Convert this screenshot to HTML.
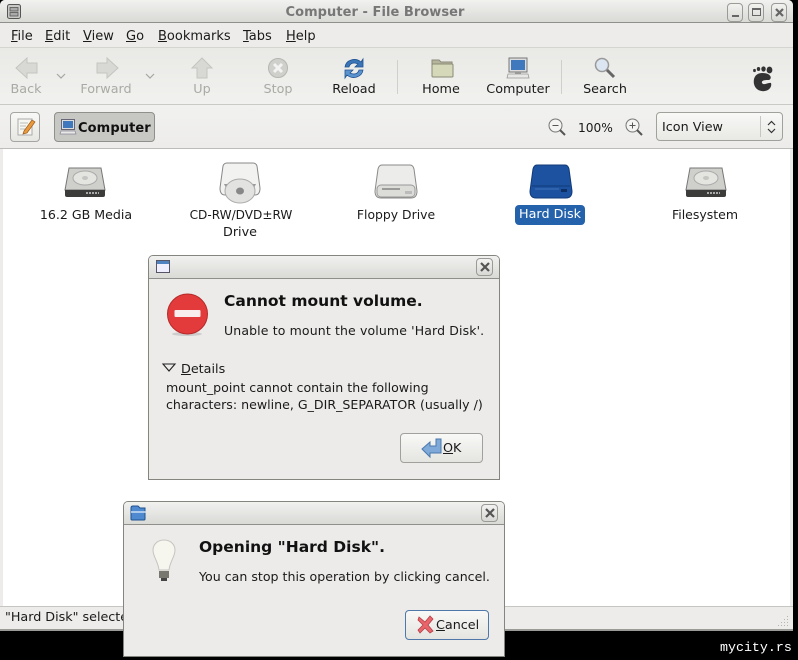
<!DOCTYPE html>
<html><head><meta charset="utf-8"><style>
html,body{margin:0;padding:0;background:#000}
#r{position:relative;width:798px;height:660px;overflow:hidden;background:#000;font-family:"DejaVu Sans",sans-serif;font-size:12.75px;color:#1a1a1a;filter:blur(.3px)}
#r div{position:absolute;box-sizing:border-box}
.t{white-space:nowrap;line-height:16px;height:16px}
.c{text-align:center;transform:translateX(-50%)}
.dis{color:#a9a9a5}
u{text-decoration:underline}
svg{position:absolute;overflow:visible}
.wb{width:16px;height:19px;border:1px solid #9a9a96;border-radius:4px;background:linear-gradient(#f2f2f0,#d8d8d5)}
.h1{font-weight:bold;font-size:15.5px;color:#111;line-height:20px;white-space:nowrap}
</style></head><body><div id="r">
<div style="left:0;top:0;width:793px;height:631px;background:#edecea;border-radius:5px 5px 0 0"></div>
<div style="left:0;top:0;width:793px;height:23px;background:linear-gradient(#f1f1ef,#d9d9d6);border-bottom:1px solid #8f8f8b;border-radius:5px 5px 0 0"></div>
<svg style="left:7px;top:4px" width="15" height="16"><rect x=".5" y=".5" width="13" height="14" rx="2" fill="#c9c9c5" stroke="#555"/><rect x="3" y="3.5" width="8" height="3.5" fill="#aaa" stroke="#555" stroke-width=".8"/><rect x="3" y="8.5" width="8" height="3.5" fill="#aaa" stroke="#555" stroke-width=".8"/></svg>
<div class="t c" style="left:375px;top:5px;font-weight:bold;font-size:13px;color:#777;letter-spacing:.05px">Computer - File Browser</div>
<div class="wb" style="left:727px;top:3px"></div><div style="left:732px;top:15px;width:7px;height:2px;background:#666"></div>
<div class="wb" style="left:748px;top:3px"></div><div style="left:752px;top:8px;width:9px;height:8px;border:1px solid #666;border-top-width:2px"></div>
<div class="wb" style="left:771px;top:3px"></div><svg style="left:775px;top:8px" width="9" height="9"><path d="M1 1L8 8M8 1L1 8" stroke="#666" stroke-width="2.2"/></svg>

<div style="left:0;top:47px;width:793px;height:1px;background:#d4d4d0"></div>
<div class="t" style="left:11px;top:29px;font-size:13px"><u>F</u>ile</div>
<div class="t" style="left:45px;top:29px;font-size:13px"><u>E</u>dit</div>
<div class="t" style="left:83px;top:29px;font-size:13px"><u>V</u>iew</div>
<div class="t" style="left:126px;top:29px;font-size:13px"><u>G</u>o</div>
<div class="t" style="left:158px;top:29px;font-size:13px"><u>B</u>ookmarks</div>
<div class="t" style="left:243px;top:29px;font-size:13px"><u>T</u>abs</div>
<div class="t" style="left:286px;top:29px;font-size:13px"><u>H</u>elp</div>

<div style="left:0;top:48px;width:793px;height:57px;background:linear-gradient(#e9e9e6,#f1f1ef);border-bottom:1px solid #c9c9c5"></div>
<svg style="left:15px;top:57px" width="24" height="22"><path d="M1 11L12 1V6H22V16H12V21Z" fill="#d8d8d4" stroke="#c4c4c0"/></svg>
<svg style="left:55px;top:72px" width="12" height="8"><path d="M2 2L6 6L10 2" fill="none" stroke="#a5a5a1" stroke-width="1.2"/></svg>
<svg style="left:95px;top:57px" width="24" height="22"><path d="M23 11L12 1V6H2V16H12V21Z" fill="#d8d8d4" stroke="#c4c4c0"/></svg>
<svg style="left:144px;top:72px" width="12" height="8"><path d="M2 2L6 6L10 2" fill="none" stroke="#a5a5a1" stroke-width="1.2"/></svg>
<svg style="left:191px;top:57px" width="22" height="22"><path d="M11 1L21 11H16V21H6V11H1Z" fill="#d8d8d4" stroke="#c4c4c0"/></svg>
<svg style="left:267px;top:57px" width="22" height="22"><circle cx="11" cy="11" r="9.5" fill="#cfcfcb" stroke="#b5b5b1"/><path d="M7 7L15 15M15 7L7 15" stroke="#f3f3f1" stroke-width="3"/></svg>
<svg style="left:343px;top:57px" width="22" height="24"><path d="M2 10C3 3 12 0 18 5L20 2V10H12L15 7C11 5 7 6 6 10Z" fill="#3a75b8" stroke="#1f5290" stroke-width=".8"/><path d="M20 13C19 20 10 23 4 18L2 21V13H10L7 16C11 18 15 17 16 13Z" fill="#5b93cf" stroke="#1f5290" stroke-width=".8"/></svg>
<div class="t c dis" style="left:26px;top:82px">Back</div>
<div class="t c dis" style="left:106px;top:82px">Forward</div>
<div class="t c dis" style="left:202px;top:82px">Up</div>
<div class="t c dis" style="left:278px;top:82px">Stop</div>
<div class="t c" style="left:354px;top:82px">Reload</div>
<div style="left:397px;top:60px;width:1px;height:34px;background:#cfcfcb"></div>
<svg style="left:431px;top:58px" width="23" height="20"><path d="M1 2H8L10 4H21V6H1Z" fill="#b5b59c" stroke="#8a8a78"/><rect x="1" y="6" width="21" height="13" rx="1" fill="#d5d9b9" stroke="#8a8a78"/></svg>
<div class="t c" style="left:441px;top:82px">Home</div>
<svg style="left:506px;top:57px" width="24" height="22"><rect x="3" y="1" width="18" height="14" fill="#ddd" stroke="#777"/><rect x="5" y="3" width="14" height="10" fill="#3f78bd"/><rect x="9" y="15" width="6" height="2" fill="#999"/><path d="M2 17H22L23 21H1Z" fill="#e8e8e6" stroke="#999" stroke-width=".8"/></svg>
<div class="t c" style="left:518px;top:82px">Computer</div>
<div style="left:561px;top:60px;width:1px;height:34px;background:#cfcfcb"></div>
<svg style="left:594px;top:57px" width="22" height="22"><path d="M12 12L20 20" stroke="#666" stroke-width="3"/><circle cx="8" cy="8" r="6.5" fill="#dbe6f2" stroke="#999" stroke-width="1.5"/></svg>
<div class="t c" style="left:605px;top:82px">Search</div>
<svg style="left:752px;top:66px" width="21" height="27"><path d="M10 7C3 7 1 13 2 18C3 23 8 26 13 25C18 24 20 20 19 17C16 16 12 20 10 17C9 14 14 14 17 14C20 13 20 7 10 7Z" fill="#333"/><ellipse cx="2.500" cy="4.500" rx="1.400" ry="1.600" fill="#333"/><ellipse cx="6.500" cy="3" rx="1.700" ry="2" fill="#333"/><ellipse cx="11.500" cy="3" rx="2.200" ry="2.600" fill="#333"/><ellipse cx="17.500" cy="4" rx="2.900" ry="3.400" fill="#333"/></svg>

<div style="left:0;top:105px;width:793px;height:44px;background:linear-gradient(#f1f1ef,#edecea);border-bottom:1px solid #bcbcb8"></div>
<div style="left:10px;top:112px;width:30px;height:30px;border:1px solid #a5a5a1;border-radius:4px;background:linear-gradient(#f8f8f6,#e6e6e3)"></div>
<svg style="left:16px;top:117px" width="20" height="20"><rect x="2" y="2" width="14" height="16" fill="#f7f7f1" stroke="#aaa"/><path d="M4 6H12M4 9H10M4 12H9" stroke="#bbb"/><path d="M8 14L16 3L19 5L11 16L7 17Z" fill="#e89a3c" stroke="#9a5a1c" stroke-width=".7"/></svg>
<div style="left:54px;top:112px;width:101px;height:30px;border:1px solid #8f8f8b;border-radius:4px;background:#c7c7c3"></div>
<svg style="left:60px;top:119px" width="16" height="16"><rect x="1.5" y=".5" width="13" height="10" fill="#ddd" stroke="#667"/><rect x="3" y="2" width="10" height="7" fill="#3f78bd"/><path d="M1 12H15L16 15H0Z" fill="#e8e8e6" stroke="#889" stroke-width=".7"/></svg>
<div class="t" style="left:78px;top:121px;font-weight:bold;font-size:13px;color:#111;letter-spacing:.1px">Computer</div>
<svg style="left:548px;top:118px" width="18" height="18"><circle cx="7.5" cy="7.5" r="6.5" fill="#f4f4f2" stroke="#777"/><path d="M4.5 7.5H10.5" stroke="#555"/><path d="M12 12L17 17" stroke="#555" stroke-width="2"/></svg>
<div class="t" style="left:578px;top:120px;font-size:12.2px">100%</div>
<svg style="left:625px;top:118px" width="18" height="18"><circle cx="7.5" cy="7.5" r="6.5" fill="#f4f4f2" stroke="#777"/><path d="M4.5 7.5H10.5M7.5 4.5V10.5" stroke="#555"/><path d="M12 12L17 17" stroke="#555" stroke-width="2"/></svg>
<div style="left:656px;top:112px;width:127px;height:29px;border:1px solid #a0a09c;border-radius:4px;background:linear-gradient(#f8f8f6,#e8e8e5)"></div>
<div class="t" style="left:662px;top:120px">Icon View</div>
<div style="left:760px;top:116px;width:1px;height:21px;background:#c5c5c1"></div>
<svg style="left:766px;top:120px" width="11" height="14"><path d="M2 5L5.5 1.5L9 5M2 9L5.5 12.5L9 9" fill="none" stroke="#333" stroke-width="1.2"/></svg>

<div style="left:3px;top:149px;width:787px;height:458px;background:#fff"></div>
<svg style="left:63px;top:166px" width="44" height="32"><path d="M6 2H38L42 24H2Z" fill="#cfcfcc" stroke="#777"/><ellipse cx="22" cy="12" rx="12" ry="7" fill="#e4e4e1" stroke="#aaa"/><ellipse cx="22" cy="12" rx="3" ry="2" fill="#c5c5c2"/><path d="M2 24H42V29Q42 31 40 31H4Q2 31 2 29Z" fill="#3c3c3a"/><path d="M23 27H36" stroke="#aaa" stroke-width="2" stroke-dasharray="2 1"/></svg>
<div class="t c" style="left:86px;top:207px;font-size:12.6px">16.2 GB Media</div>
<svg style="left:218px;top:162px" width="44" height="42"><path d="M9 1H35Q38 1 39 4L42 26Q42 33 37 33H7Q2 33 2 26L5 4Q6 1 9 1Z" fill="#f2f2f0" stroke="#888"/><path d="M6 22H38L36 26H8Z" fill="#999"/><ellipse cx="22" cy="29" rx="15" ry="12" fill="#e2e2e0" stroke="#aaa"/><ellipse cx="22" cy="29" rx="4" ry="3.5" fill="#888"/></svg>
<div class="t c" style="left:241px;top:207px;font-size:12.1px">CD-RW/DVD±RW</div>
<div class="t c" style="left:240px;top:225px">Drive</div>
<svg style="left:374px;top:164px" width="44" height="36"><path d="M8 1H36Q39 1 40 5L43 27Q43 34 37 34H7Q1 34 1 27L4 5Q5 1 8 1Z" fill="#ececea" stroke="#8a8a88"/><rect x="3" y="21" width="38" height="12" rx="4" fill="#dcdcd9" stroke="#999"/><path d="M8 25H26" stroke="#9a9a98" stroke-width="2"/><rect x="31" y="27" width="7" height="3" fill="#bbb"/></svg>
<div class="t c" style="left:396px;top:207px;font-size:12.4px">Floppy Drive</div>
<svg style="left:529px;top:164px" width="44" height="36"><path d="M8 1H36Q39 1 40 5L43 27Q43 34 37 34H7Q1 34 1 27L4 5Q5 1 8 1Z" fill="#1c529f" stroke="#123a78"/><path d="M3 22H41" stroke="#0f3a7a"/><path d="M6 25H30" stroke="#3f72b8"/><rect x="32" y="25" width="6" height="3" fill="#0e2f63"/></svg>
<div style="left:515px;top:205px;width:70px;height:20px;background:#2562ac;border-radius:4px"></div>
<div class="t c" style="left:550px;top:207px;color:#fff">Hard Disk</div>
<svg style="left:684px;top:166px" width="44" height="32"><path d="M6 2H38L42 24H2Z" fill="#cfcfcc" stroke="#777"/><ellipse cx="22" cy="12" rx="12" ry="7" fill="#e4e4e1" stroke="#aaa"/><ellipse cx="22" cy="12" rx="3" ry="2" fill="#c5c5c2"/><path d="M2 24H42V29Q42 31 40 31H4Q2 31 2 29Z" fill="#3c3c3a"/><path d="M23 27H36" stroke="#aaa" stroke-width="2" stroke-dasharray="2 1"/></svg>
<div class="t c" style="left:705px;top:207px;font-size:12.5px">Filesystem</div>

<div style="left:0;top:606px;width:793px;height:1px;background:#c5c5c1"></div>
<div class="t" style="left:5px;top:610px;font-size:12.75px;letter-spacing:-.02px">"Hard Disk" selected</div>
<div style="left:0;top:629px;width:793px;height:2px;background:#9a9a96"></div>
<svg style="left:778px;top:615px" width="12" height="12"><g fill="#b5b5b1"><rect x="9" y="1" width="1" height="1"/><rect x="6" y="4" width="1" height="1"/><rect x="9" y="4" width="1" height="1"/><rect x="3" y="7" width="1" height="1"/><rect x="6" y="7" width="1" height="1"/><rect x="9" y="7" width="1" height="1"/><rect x="0" y="10" width="1" height="1"/><rect x="3" y="10" width="1" height="1"/><rect x="6" y="10" width="1" height="1"/><rect x="9" y="10" width="1" height="1"/></g></svg>
<div class="t" style="left:720px;top:640px;font-family:'Liberation Mono',monospace;font-size:13.3px;color:#fff">mycity.rs</div>

<!-- dialog 1 -->
<div style="left:148px;top:255px;width:352px;height:225px;background:#ecebe9;border:1px solid #85857f;border-radius:5px 5px 0 0"></div>
<div style="left:149px;top:256px;width:350px;height:23px;background:linear-gradient(#f1f1ef,#d9d9d6);border-bottom:1px solid #8f8f8b;border-radius:4px 4px 0 0"></div>
<svg style="left:156px;top:260px" width="15" height="14"><rect x=".5" y=".5" width="13" height="12" fill="#eef" stroke="#556"/><rect x="1" y="1" width="12" height="3" fill="#4f82c0"/></svg>
<div class="wb" style="left:476px;top:258px;width:17px;height:18px"></div><svg style="left:480px;top:262px" width="10" height="10"><path d="M1 1L9 9M9 1L1 9" stroke="#555" stroke-width="2.2"/></svg>
<svg style="left:166px;top:293px" width="44" height="44"><ellipse cx="21" cy="41" rx="15" ry="2" fill="#ccc"/><circle cx="21.500" cy="21" r="20" fill="#e33b3b" stroke="#b52a2a"/><rect x="8.500" y="17" width="26" height="7" rx="1" fill="#f8eeee"/></svg>
<div class="h1" style="left:224px;top:291px">Cannot mount volume.</div>
<div class="t" style="left:224px;top:323px;font-size:12.5px;letter-spacing:.13px">Unable to mount the volume 'Hard Disk'.</div>
<svg style="left:162px;top:363px" width="14" height="10"><path d="M1 1H13L7 8Z" fill="none" stroke="#222" stroke-width="1.1"/></svg>
<div class="t" style="left:181px;top:362px"><u>D</u>etails</div>
<div class="t" style="left:166px;top:380px;font-size:12.6px">mount_point cannot contain the following</div>
<div class="t" style="left:166px;top:397px;font-size:12.6px">characters: newline, G_DIR_SEPARATOR (usually /)</div>
<div style="left:400px;top:433px;width:83px;height:30px;border:1px solid #a0a09c;border-radius:4px;background:linear-gradient(#f8f8f6,#e4e4e1)"></div>
<svg style="left:421px;top:438px" width="22" height="20"><path d="M1 11L9 4V8H15V1H20V15H9V19Z" fill="#7ea9d8" stroke="#4a78ad"/></svg>
<div class="t" style="left:443px;top:441px"><u>O</u>K</div>

<!-- dialog 2 -->
<div style="left:123px;top:501px;width:382px;height:156px;background:#ecebe9;border:1px solid #85857f;border-radius:5px 5px 0 0"></div>
<div style="left:124px;top:502px;width:380px;height:23px;background:linear-gradient(#f1f1ef,#d9d9d6);border-bottom:1px solid #8f8f8b;border-radius:4px 4px 0 0"></div>
<svg style="left:130px;top:505px" width="17" height="16"><path d="M1 3Q1 1 3 1H8L10 3H15V14Q15 15 14 15H2Q1 15 1 14Z" fill="#4f8ad0" stroke="#1f5290"/><path d="M1 7H16" stroke="#cfe0f4" stroke-width="1.5"/></svg>
<div class="wb" style="left:481px;top:504px;width:17px;height:18px"></div><svg style="left:485px;top:508px" width="10" height="10"><path d="M1 1L9 9M9 1L1 9" stroke="#555" stroke-width="2.2"/></svg>
<svg style="left:150px;top:538px" width="28" height="48"><path d="M14 2C7 2 3 7 3 12C3 19 8 23 9 32H19C20 23 25 19 25 12C25 7 21 2 14 2Z" fill="#f6f6ee" stroke="#c4c4c0"/><rect x="9" y="33" width="10" height="7" fill="#77776f"/><rect x="11" y="40" width="6" height="3" fill="#444"/></svg>
<div class="h1" style="left:199px;top:537px">Opening "Hard Disk".</div>
<div class="t" style="left:199px;top:569px;font-size:12.6px">You can stop this operation by clicking cancel.</div>
<div style="left:405px;top:610px;width:84px;height:30px;border:1px solid #4f78a8;border-radius:4px;background:linear-gradient(#f8f8f6,#e4e4e1)"></div>
<svg style="left:417px;top:615px" width="17" height="19"><path d="M2 2L8 7L13 1L16 4L11 10L16 16L13 18L8 13L3 18L1 15L6 10L1 5Z" fill="#e8656b" stroke="#b54046" stroke-width=".8"/></svg>
<div class="t" style="left:436px;top:618px"><u>C</u>ancel</div>
</div></body></html>
